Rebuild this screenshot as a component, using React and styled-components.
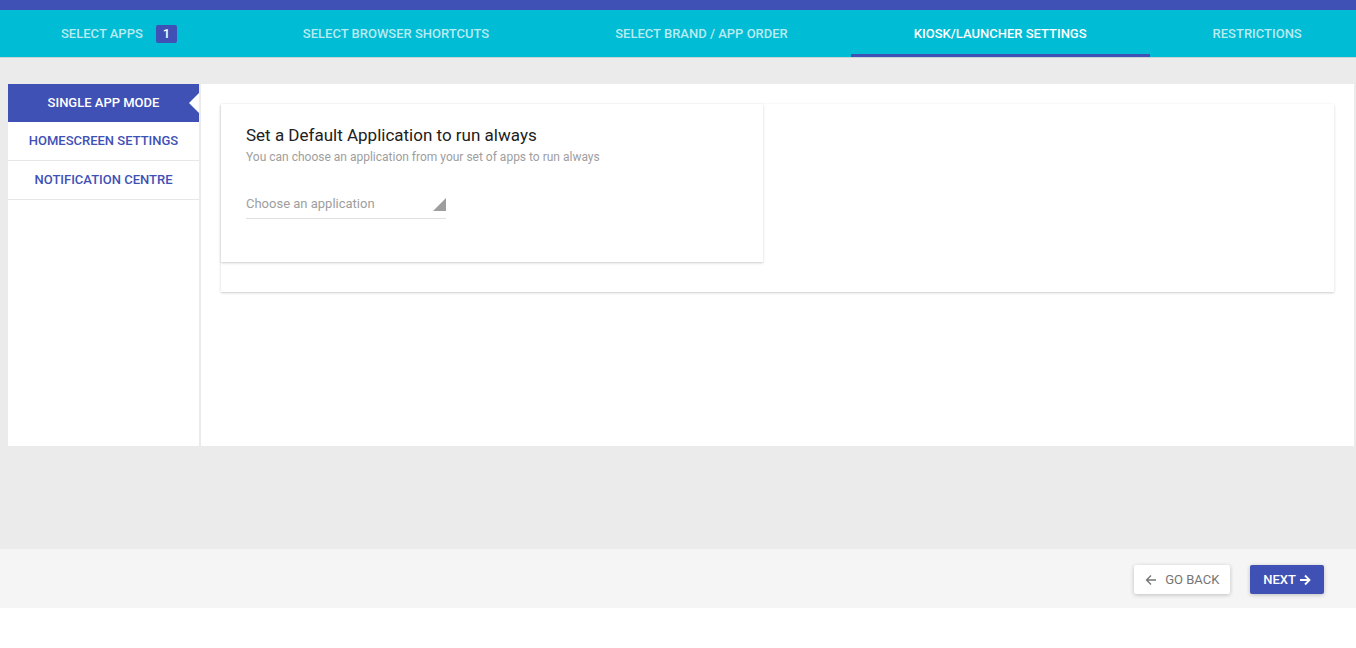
import React from 'react';
import styled, { createGlobalStyle } from 'styled-components';

const GlobalStyle = createGlobalStyle`
  html, body {
    margin: 0;
    padding: 0;
    background: #ffffff;
    font-family: Roboto, "Liberation Sans", sans-serif;
  }
  * { box-sizing: border-box; }
`;

const tabs = [
  { label: 'Select Apps', badge: 1 },
  { label: 'Select Browser Shortcuts' },
  { label: 'Select Brand / App Order' },
  { label: 'Kiosk/Launcher Settings', active: true },
  { label: 'Restrictions' },
];

const sideItems = [
  { label: 'Single App Mode', active: true },
  { label: 'Homescreen Settings' },
  { label: 'Notification Centre' },
];

export default function App() {
  return (
    <Page>
      <GlobalStyle />
      <TopStrip />
      <TabBar>
        {tabs.map((t) => (
          <Tab key={t.label} active={t.active}>
            {t.label}
            {t.badge && <Badge>{t.badge}</Badge>}
          </Tab>
        ))}
      </TabBar>
      <Body>
        <Panel>
          <Sidebar>
            {sideItems.map((s) => (
              <SideItem key={s.label} active={s.active}>
                {s.label}
              </SideItem>
            ))}
          </Sidebar>
          <Content>
            <OuterCard>
              <InnerCard>
                <Title>Set a Default Application to run always</Title>
                <Subtitle>You can choose an application from your set of apps to run always</Subtitle>
                <Select>
                  <span>Choose an application</span>
                  <Caret />
                </Select>
              </InnerCard>
            </OuterCard>
          </Content>
        </Panel>
      </Body>
      <Footer>
        <Button>
          <svg width="12" height="12" viewBox="0 0 12 12" fill="none" stroke="currentColor" strokeWidth="1.3">
            <path d="M11 6H1.5M6 1.5L1.5 6L6 10.5" />
          </svg>
          Go Back
        </Button>
        <Button primary>
          Next
          <svg width="12" height="12" viewBox="0 0 12 12" fill="none" stroke="currentColor" strokeWidth="1.8">
            <path d="M1 6h9.5M6 1.5L10.5 6L6 10.5" />
          </svg>
        </Button>
      </Footer>
    </Page>
  );
}

const Page = styled.div`
  display: flex;
  flex-direction: column;
  width: 100%;
  overflow: hidden;
`;

const TopStrip = styled.div`
  height: 10px;
  background: #3f51b5;
`;

const TabBar = styled.div`
  display: flex;
  height: 48px;
  background: #00bcd4;
  border-bottom: 1px solid #c9d4d6;
  overflow: hidden;
`;

const Tab = styled.div`
  flex: none;
  display: flex;
  align-items: center;
  justify-content: center;
  white-space: nowrap;
  position: relative;
  padding: 0 63px;
  font-size: 13px;
  font-weight: 500;
  text-transform: uppercase;
  color: ${({ active }) => (active ? '#ffffff' : 'rgba(255,255,255,0.72)')};
  &:first-child {
    padding-left: 61px;
  }
  &::after {
    content: '';
    display: ${({ active }) => (active ? 'block' : 'none')};
    position: absolute;
    left: 0;
    right: 0;
    bottom: -1px;
    height: 4px;
    background: #3f51b5;
  }
`;

const Badge = styled.span`
  display: inline-flex;
  align-items: center;
  justify-content: center;
  width: 21px;
  height: 18px;
  margin-left: 13px;
  background: #3f51b5;
  color: #fff;
  border-radius: 2px;
  font-size: 13px;
  font-weight: 500;
`;

const Body = styled.div`
  background: #ebebeb;
  padding: 26px 2px 103px 8px;
`;

const Panel = styled.div`
  display: flex;
  height: 362px;
  background: #ffffff;
`;

const Sidebar = styled.div`
  width: 191px;
  display: flex;
  flex-direction: column;
  border-right: 2px solid #ebebeb;
  box-sizing: content-box;
`;

const SideItem = styled.div`
  position: relative;
  height: ${({ active }) => (active ? '38px' : '39px')};
  display: flex;
  align-items: center;
  justify-content: center;
  padding-bottom: 2px;
  font-size: 13px;
  font-weight: 500;
  text-transform: uppercase;
  background: ${({ active }) => (active ? '#3f51b5' : '#ffffff')};
  color: ${({ active }) => (active ? '#ffffff' : '#3f51b5')};
  border-bottom: ${({ active }) => (active ? 'none' : '1px solid #e6e6e6')};
  &::after {
    content: '';
    display: ${({ active }) => (active ? 'block' : 'none')};
    position: absolute;
    right: 0;
    top: 9px;
    border-style: solid;
    border-width: 10px 10px 10px 0;
    border-color: transparent #ffffff transparent transparent;
  }
`;

const Content = styled.div`
  flex: 1;
  padding: 20px 20px 0 20px;
`;

const OuterCard = styled.div`
  height: 188px;
  background: #fff;
  box-shadow: 0 1px 3px rgba(0, 0, 0, 0.14), 0 1px 1px rgba(0, 0, 0, 0.06);
`;

const InnerCard = styled.div`
  width: 542px;
  height: 158px;
  padding: 21px 25px 0 25px;
  background: #fff;
  box-shadow: 0 1px 3px rgba(0, 0, 0, 0.14), 0 1px 1px rgba(0, 0, 0, 0.06);
`;

const Title = styled.div`
  font-size: 17px;
  font-weight: 400;
  color: #212121;
  line-height: 20px;
`;

const Subtitle = styled.div`
  margin-top: 5px;
  font-size: 12px;
  color: #9e9e9e;
  line-height: 15px;
`;

const Select = styled.div`
  position: relative;
  margin-top: 22px;
  width: 200px;
  height: 32px;
  display: flex;
  align-items: center;
  padding-top: 2px;
  border-bottom: 1px solid #e0e0e0;
  font-size: 13px;
  color: #9e9e9e;
`;

const Caret = styled.span`
  position: absolute;
  right: 0;
  top: 11px;
  width: 0;
  height: 0;
  border-style: solid;
  border-width: 0 0 13px 13px;
  border-color: transparent transparent #9e9e9e transparent;
`;

const Footer = styled.div`
  height: 59px;
  background: #f5f5f5;
  display: flex;
  align-items: center;
  justify-content: flex-end;
  gap: 20px;
  padding-right: 32px;
  padding-top: 2px;
`;

const Button = styled.button`
  height: 29px;
  display: flex;
  align-items: center;
  gap: ${({ primary }) => (primary ? '3px' : '8px')};
  padding: 0 ${({ primary }) => (primary ? '13px' : '11px')};
  border: none;
  border-radius: 2px;
  font-family: Roboto, "Liberation Sans", sans-serif;
  font-size: 13px;
  font-weight: ${({ primary }) => (primary ? 500 : 400)};
  text-transform: uppercase;
  background: ${({ primary }) => (primary ? '#3f51b5' : '#ffffff')};
  color: ${({ primary }) => (primary ? '#ffffff' : '#757575')};
  box-shadow: 0 1px 4px rgba(0, 0, 0, 0.22);
`;
